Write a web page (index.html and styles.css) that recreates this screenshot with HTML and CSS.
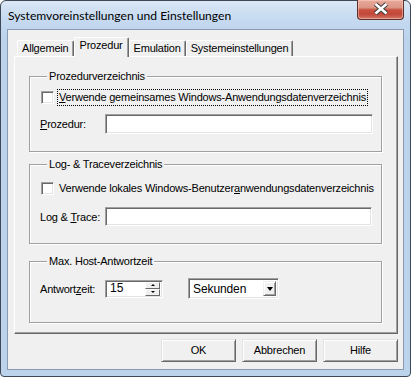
FILE: index.html
```html
<!DOCTYPE html>
<html>
<head>
<meta charset="utf-8">
<link rel="stylesheet" href="styles.css">
</head>
<body>
<div class="window">
  <div class="titlebar">
    <span class="title">Systemvoreinstellungen und Einstellungen</span>
    <div class="close">
      <svg width="45" height="18" viewBox="0 0 45 18">
        <path d="M17.5 4 L28.5 13.5 M28.5 4 L17.5 13.5" stroke="#3c3c3c" stroke-width="4.6" fill="none"/>
        <path d="M17.5 4 L28.5 13.5 M28.5 4 L17.5 13.5" stroke="#ffffff" stroke-width="2.6" fill="none"/>
      </svg>
    </div>
  </div>
  <div class="client">
    <div class="tabs">
      <div class="tab">Allgemein</div>
      <div class="tab active">Prozedur</div>
      <div class="tab">Emulation</div>
      <div class="tab">Systemeinstellungen</div>
    </div>
    <div class="panel">
      <fieldset class="group g1">
        <legend>Prozedurverzeichnis</legend>
        <div class="check-row">
          <span class="checkbox"></span>
          <span class="check-label focus"><u>V</u>erwende gemeinsames Windows-Anwendungsdatenverzeichnis</span>
        </div>
        <div class="field-row">
          <span class="label"><u>P</u>rozedur:</span>
          <span class="textbox"></span>
        </div>
      </fieldset>
      <fieldset class="group g2">
        <legend>Log- &amp; Traceverzeichnis</legend>
        <div class="check-row">
          <span class="checkbox"></span>
          <span class="check-label">Verwende lokales Windows-Benutzer<u>a</u>nwendungsdatenverzeichnis</span>
        </div>
        <div class="field-row">
          <span class="label">Log &amp; <u>T</u>race:</span>
          <span class="textbox"></span>
        </div>
      </fieldset>
      <fieldset class="group g3">
        <legend>Max. Host-Antwortzeit</legend>
        <div class="field-row">
          <span class="label">Antwort<u>z</u>eit:</span>
          <span class="spinbox">
            <span class="spin-value">15</span>
            <span class="spin-buttons">
              <span class="spin-btn"><span class="arr-up"></span></span>
              <span class="spin-btn"><span class="arr-down"></span></span>
            </span>
          </span>
          <span class="combo">
            <span class="combo-value">Sekunden</span>
            <span class="combo-btn"><span class="arr-big"></span></span>
          </span>
        </div>
      </fieldset>
    </div>
    <div class="buttons">
      <div class="btn">OK</div>
      <div class="btn">Abbrechen</div>
      <div class="btn">Hilfe</div>
    </div>
  </div>
</div>
</body>
</html>
```

FILE: styles.css
```css
html, body {
  margin: 0;
  padding: 0;
  background: #ffffff;
}

.window {
  width: 411px;
  height: 377px;
  box-sizing: border-box;
  border: 1px solid #3d4957;
  border-radius: 6px 6px 4px 4px;
  background: linear-gradient(#dae7f5 0px, #c4d9f0 20px, #bcd3ec 40px, #bcd3ec 100%);
  padding: 0 6px 6px 6px;
  display: flex;
  flex-direction: column;
  font-family: "Liberation Sans", Arial, sans-serif;
  font-size: 11px;
  letter-spacing: -0.2px;
  color: #000;
}

.titlebar {
  height: 28px;
  display: flex;
  align-items: flex-start;
  justify-content: space-between;
}

.title {
  font-family: Lato, "Liberation Sans", sans-serif;
  font-size: 12.1px;
  letter-spacing: 0;
  line-height: 16px;
  margin-top: 7px;
  margin-left: 1px;
  color: #000;
}

.close {
  width: 47px;
  height: 20px;
  box-sizing: border-box;
  margin-top: -1px;
  border: 1px solid #5b3129;
  border-top: none;
  border-radius: 0 0 4px 4px;
  background: linear-gradient(#e9aa9b 0%, #dd9585 40%, #c8513f 52%, #c2483a 75%, #d47a68 100%);
  box-shadow: inset 0 0 0 1px rgba(255,220,210,0.45);
  display: flex;
}

.client {
  flex: 1;
  border: 1px solid #8a9bb0;
  background: #f0f0f0;
  padding: 7px 5px 0 6px;
  display: flex;
  flex-direction: column;
}

.tabs {
  display: flex;
  align-items: flex-end;
  height: 19px;
  padding-left: 3px;
  position: relative;
  z-index: 1;
}

.tab {
  line-height: 13px;
  padding: 1px 4px 1px 4px;
  border-left: 1px solid #ffffff;
  border-top: 1px solid #ffffff;
  border-right: 1px solid #696969;
  box-shadow: inset -1px 0 0 #a0a0a0;
  border-radius: 2px 2px 0 0;
  background: #f0f0f0;
}

.tab.active {
  padding: 1px 5px 5px 5px;
  margin-bottom: -1px;
}

.panel {
  height: 278px;
  box-sizing: border-box;
  border-top: 1px solid #ffffff;
  border-left: 1px solid #ffffff;
  border-right: 1px solid #696969;
  border-bottom: 1px solid #696969;
  box-shadow: inset -1px -1px 0 #a0a0a0;
  padding: 13px 15px 0 14px;
  display: flex;
  flex-direction: column;
}

.group {
  margin: 0;
  border: 1px solid #a0a0a0;
  box-shadow: inset 1px 1px 0 #ffffff, 1px 1px 0 #ffffff;
  padding: 6px 8px 17px 11px;
  min-width: 0;
}

.group legend {
  line-height: 13px;
  padding: 0 2px;
  margin-left: 6px;
  background: #f0f0f0;
}

.g2 {
  margin-top: 6px;
  padding-top: 9px;
  padding-bottom: 17px;
}

.g3 {
  margin-top: 11px;
  padding-top: 10px;
  padding-bottom: 23px;
}

.check-row {
  display: flex;
  align-items: center;
  height: 17px;
}

.checkbox {
  width: 13px;
  height: 13px;
  box-sizing: border-box;
  border: 1px solid;
  border-color: #a0a0a0 #ffffff #ffffff #a0a0a0;
  box-shadow: inset 1px 1px 0 #696969, inset -1px -1px 0 #e3e3e3;
  background: #ffffff;
  flex: none;
}

.check-label {
  margin-left: 4px;
  padding: 1px 1px;
  line-height: 13px;
  white-space: nowrap;
}

.check-label.focus {
  outline: 1px dotted #000;
  outline-offset: 0;
}

.field-row {
  display: flex;
  align-items: center;
  margin-top: 8px;
}

.g2 .field-row {
  margin-top: 10px;
}

.g3 .field-row {
  margin-top: 0;
}

.label {
  width: 65px;
  margin-left: -1px;
  flex: none;
  white-space: nowrap;
}

.textbox {
  flex: 1;
  height: 20px;
  box-sizing: border-box;
  border: 1px solid;
  border-color: #a0a0a0 #ffffff #ffffff #a0a0a0;
  box-shadow: inset 1px 1px 0 #696969, inset -1px -1px 0 #e3e3e3;
  background: #ffffff;
}

.g2 .textbox {
  height: 19px;
  margin-right: 1px;
}

.spinbox {
  width: 58px;
  height: 18px;
  box-sizing: border-box;
  border: 1px solid;
  border-color: #a0a0a0 #ffffff #ffffff #a0a0a0;
  box-shadow: inset 1px 1px 0 #696969, inset -1px -1px 0 #e3e3e3;
  background: #ffffff;
  display: flex;
  align-items: center;
  justify-content: space-between;
  padding: 2px 2px 2px 4px;
  font-size: 12px;
  letter-spacing: 0;
}

.spin-value {
  line-height: 13px;
}

.spin-buttons {
  display: flex;
  flex-direction: column;
  width: 15px;
  height: 14px;
}

.spin-btn {
  flex: 1;
  background: #f0f0f0;
  border: 1px solid;
  border-color: #ffffff #696969 #696969 #ffffff;
  display: flex;
  align-items: center;
  justify-content: center;
}

.arr-up {
  width: 0;
  height: 0;
  border-left: 2px solid transparent;
  border-right: 2px solid transparent;
  border-bottom: 2px solid #000;
}

.arr-down {
  width: 0;
  height: 0;
  border-left: 2px solid transparent;
  border-right: 2px solid transparent;
  border-top: 2px solid #000;
}

.combo {
  margin-left: 25px;
  width: 91px;
  height: 21px;
  box-sizing: border-box;
  border: 1px solid;
  border-color: #a0a0a0 #ffffff #ffffff #a0a0a0;
  box-shadow: inset 1px 1px 0 #696969, inset -1px -1px 0 #e3e3e3;
  background: #ffffff;
  display: flex;
  align-items: center;
  justify-content: space-between;
  padding: 2px;
  font-size: 12px;
  letter-spacing: -0.1px;
}

.combo-value {
  margin-left: 2px;
  line-height: 14px;
}

.combo-btn {
  width: 13px;
  height: 15px;
  box-sizing: border-box;
  background: #f0f0f0;
  border: 1px solid;
  border-color: #f0f0f0 #696969 #696969 #f0f0f0;
  box-shadow: inset 1px 1px 0 #ffffff, inset -1px -1px 0 #a0a0a0;
  display: flex;
  align-items: center;
  justify-content: center;
}

.arr-big {
  width: 0;
  height: 0;
  border-left: 3.5px solid transparent;
  border-right: 3.5px solid transparent;
  border-top: 4px solid #000;
}

.buttons {
  display: flex;
  justify-content: flex-end;
  gap: 6px;
  margin-top: 5px;
  padding-right: 0;
}

.btn {
  width: 75px;
  height: 23px;
  box-sizing: border-box;
  border: 1px solid;
  border-color: #e3e3e3 #696969 #696969 #e3e3e3;
  box-shadow: inset 1px 1px 0 #ffffff, inset -1px -1px 0 #a0a0a0;
  background: #f0f0f0;
  display: flex;
  align-items: center;
  justify-content: center;
  line-height: 13px;
}
```
